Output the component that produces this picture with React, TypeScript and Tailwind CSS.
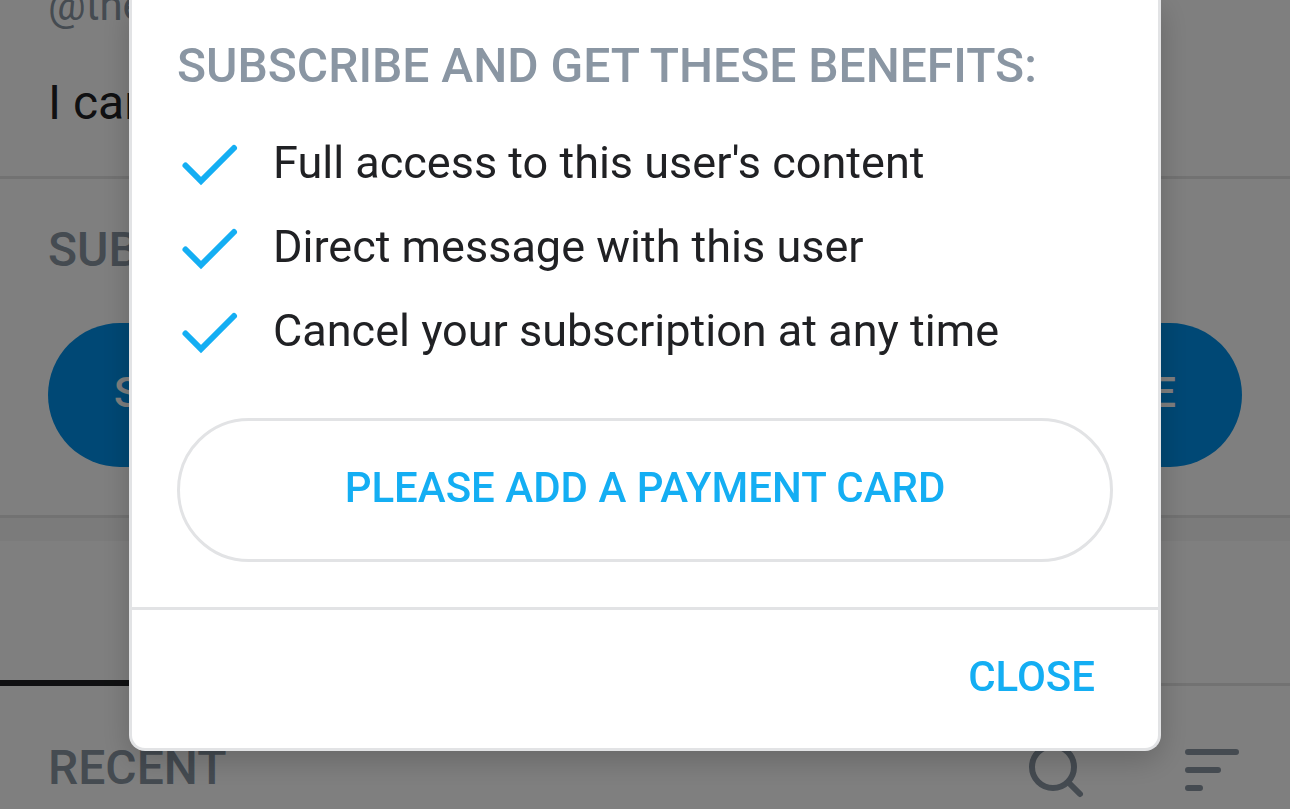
import type { ReactNode } from "react";

const benefits = [
  "Full access to this user's content",
  "Direct message with this user",
  "Cancel your subscription at any time",
];

function CheckIcon() {
  return (
    <svg width="66" height="66" viewBox="0 0 66 66" fill="none" className="shrink-0 text-[#14aef3]" aria-hidden="true">
      <path d="M8.5 35.5 L24 51 L57 18" stroke="currentColor" strokeWidth="6" strokeLinecap="round" />
    </svg>
  );
}

function SearchIcon() {
  return (
    <svg width="60" height="60" viewBox="0 0 60 60" fill="none" stroke="currentColor" strokeWidth="6" strokeLinecap="round" aria-hidden="true">
      <circle cx="27" cy="27" r="21" />
      <path d="M42.5 42.5 L54 54" />
    </svg>
  );
}

function SortIcon() {
  return (
    <svg width="54" height="60" viewBox="0 0 54 60" fill="none" stroke="currentColor" strokeWidth="6" strokeLinecap="round" aria-hidden="true">
      <path d="M3 12 H51 M3 30 H33 M3 48 H15" />
    </svg>
  );
}

function SectionTitle({ children }: { children: ReactNode }) {
  return <h2 className="text-[48px] leading-[56px] font-medium text-[#8a96a3]">{children}</h2>;
}

function Profile() {
  return (
    <main className="bg-white">
      <section className="-mt-[18px] border-b-3 border-[#e5e5e5] px-12 pb-[45px]">
        <p className="text-[42px] leading-[48px] text-[#8a96a3]">@the</p>
        <p className="mt-[45px] text-[48px] leading-[56px]">I can</p>
      </section>

      <section className="border-b-3 border-[#e5e5e5] px-12 pt-[43px] pb-12">
        <SectionTitle>SUB</SectionTitle>
        <button className="mt-[45px] flex h-36 w-full items-center justify-between rounded-full bg-[#0091ea] px-[66px] pb-1.5 text-[42px] font-medium text-white">
          <span>S</span>
          <span>E</span>
        </button>
      </section>

      <div className="h-[23px] bg-[#f6f6f6]" />

      <div className="flex h-[145px] border-b-3 border-[#e5e5e5]">
        <div className="-mb-[3px] w-1/2 border-b-6 border-[#202124]" />
      </div>

      <section className="flex items-start justify-between pt-[54px] pr-[51px] pl-12">
        <SectionTitle>RECENT</SectionTitle>
        <div className="flex items-center gap-[99px] text-[#8a96a3]">
          <button aria-label="Search">
            <SearchIcon />
          </button>
          <button aria-label="Sort">
            <SortIcon />
          </button>
        </div>
      </section>
    </main>
  );
}

function SubscribeModal() {
  return (
    <div className="fixed inset-0 flex items-start justify-center bg-black/50">
      <div
        role="dialog"
        aria-modal="true"
        className="w-4/5 rounded-b-2xl border-3 border-t-0 border-[#e2e3e5] bg-white shadow-[0_9px_30px_rgba(0,0,0,0.2)]"
      >
        <div className="px-[45px] pt-[38px] pb-[45px]">
          <SectionTitle>SUBSCRIBE AND GET THESE BENEFITS:</SectionTitle>
          <ul className="mt-[27px]">
            {benefits.map((benefit) => (
              <li key={benefit} className="flex h-[84px] items-center gap-[30px] text-[45px]">
                <CheckIcon />
                {benefit}
              </li>
            ))}
          </ul>
          <button className="mt-[45px] h-36 w-full rounded-full border-3 border-[#e2e3e5] pb-1.5 text-[42px] font-medium text-[#14aef3]">
            PLEASE ADD A PAYMENT CARD
          </button>
        </div>
        <div className="flex justify-end border-t-3 border-[#e2e3e5] px-[45px] py-6">
          <button className="h-[90px] px-[18px] pb-1.5 text-[42px] font-medium text-[#14aef3]">CLOSE</button>
        </div>
      </div>
    </div>
  );
}

export default function App() {
  return (
    <div className="h-screen overflow-hidden font-[Roboto,sans-serif] text-[#202124]">
      <Profile />
      <SubscribeModal />
    </div>
  );
}
